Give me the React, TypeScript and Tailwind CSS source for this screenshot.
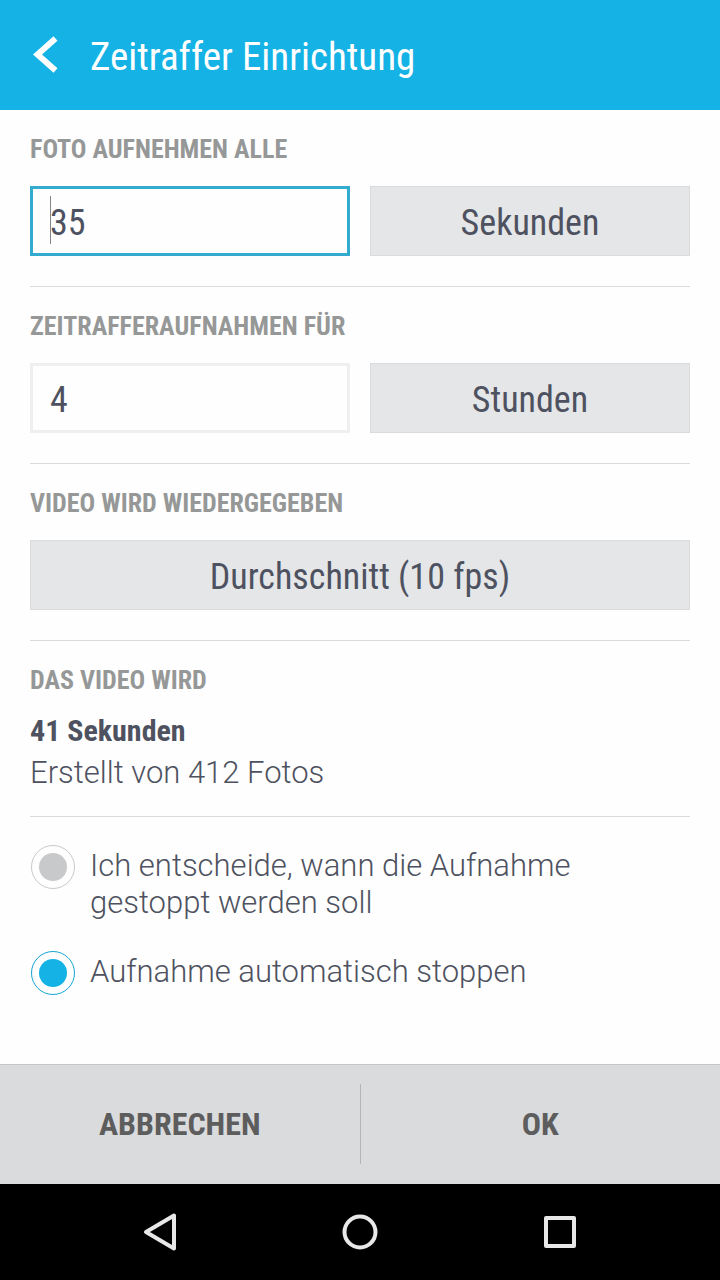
import { useState } from 'react'
import type { ReactNode } from 'react'

type StopMode = 'manual' | 'auto'

interface SectionProps {
  title: string
  htmlFor?: string
  children: ReactNode
}

function Section({ title, htmlFor, children }: SectionProps) {
  return (
    <section className="border-b border-[#dadbdc] pt-6 pb-[30px]">
      <label htmlFor={htmlFor} className="block mb-[22px] text-[26px] leading-[30px] font-bold text-[#969898]">
        {title}
      </label>
      {children}
    </section>
  )
}

interface NumberFieldProps {
  id: string
  value: string
  focused: boolean
  onChange: (value: string) => void
  onFocus: () => void
}

function NumberField({ id, value, focused, onChange, onFocus }: NumberFieldProps) {
  return (
    <div className="relative">
      <input
        id={id}
        type="text"
        inputMode="numeric"
        value={value}
        onChange={(e) => onChange(e.target.value)}
        onFocus={onFocus}
        className={`block w-full h-[70px] rounded-none border-[3px] pl-[17px] pt-1 text-4xl text-[#4e5260] caret-transparent outline-none ${
          focused ? 'border-[#33abce]' : 'border-[#efeff0]'
        }`}
      />
      {/* Cursor */}
      {focused && <span className="absolute left-5 top-2.5 h-12 w-px bg-[#85868b] pointer-events-none" />}
    </div>
  )
}

interface PickerProps {
  id?: string
  label: string
  value: string
  options: string[]
  onChange: (value: string) => void
}

function Picker({ id, label, value, options, onChange }: PickerProps) {
  return (
    <select
      id={id}
      aria-label={label}
      value={value}
      onChange={(e) => onChange(e.target.value)}
      className="block w-full h-[70px] appearance-none rounded-none border border-[#dadbdc] bg-[#e5e6e8] pt-1 text-center [text-align-last:center] text-4xl text-[#4e5260] outline-none"
    >
      {options.map((option) => (
        <option key={option} value={option}>{option}</option>
      ))}
    </select>
  )
}

const units = ['Sekunden', 'Minuten', 'Stunden']
const speeds = ['Langsam (5 fps)', 'Durchschnitt (10 fps)', 'Schnell (20 fps)']

const stopModes: { value: StopMode; label: string }[] = [
  { value: 'manual', label: 'Ich entscheide, wann die Aufnahme gestoppt werden soll' },
  { value: 'auto', label: 'Aufnahme automatisch stoppen' },
]

export default function App() {
  const [interval, setInterval] = useState('35')
  const [intervalUnit, setIntervalUnit] = useState('Sekunden')
  const [duration, setDuration] = useState('4')
  const [durationUnit, setDurationUnit] = useState('Stunden')
  const [speed, setSpeed] = useState('Durchschnitt (10 fps)')
  const [stopMode, setStopMode] = useState<StopMode>('auto')
  const [focused, setFocused] = useState('interval')

  return (
    <div className="flex min-h-screen flex-col bg-[#fefefe] font-['Roboto_Condensed','Roboto',sans-serif]">
      {/* Header */}
      <header className="flex h-[110px] items-center bg-[#15b2e5] pl-[30px] text-white">
        <button type="button" aria-label="Zurück" className="w-[60px]">
          <svg width="30" height="40" viewBox="0 0 30 40" fill="none" stroke="currentColor" strokeWidth="6">
            <path d="M25.5 3.5 7.5 19.5 25.5 35.5" />
          </svg>
        </button>
        <h1 className="pt-1 text-[39px] leading-[48px]">Zeitraffer Einrichtung</h1>
      </header>

      <main className="flex-1 px-[30px]">
        <Section title="FOTO AUFNEHMEN ALLE" htmlFor="interval">
          <div className="grid grid-cols-2 gap-5">
            <NumberField
              id="interval"
              value={interval}
              focused={focused === 'interval'}
              onChange={setInterval}
              onFocus={() => setFocused('interval')}
            />
            <Picker label="Einheit Intervall" value={intervalUnit} options={units} onChange={setIntervalUnit} />
          </div>
        </Section>

        <Section title="ZEITRAFFERAUFNAHMEN FÜR" htmlFor="duration">
          <div className="grid grid-cols-2 gap-5">
            <NumberField
              id="duration"
              value={duration}
              focused={focused === 'duration'}
              onChange={setDuration}
              onFocus={() => setFocused('duration')}
            />
            <Picker label="Einheit Dauer" value={durationUnit} options={units} onChange={setDurationUnit} />
          </div>
        </Section>

        <Section title="VIDEO WIRD WIEDERGEGEBEN" htmlFor="speed">
          <Picker id="speed" label="Video wird wiedergegeben" value={speed} options={speeds} onChange={setSpeed} />
        </Section>

        {/* Summary */}
        <section className="border-b border-[#dadbdc] pt-6 pb-[22px] text-[#4e5260]">
          <h2 className="mb-[15px] text-[26px] leading-[30px] font-bold text-[#969898]">DAS VIDEO WIRD</h2>
          <p className="text-[30px] leading-[42px] font-bold">41 Sekunden</p>
          <p className="font-['Roboto',sans-serif] text-[31px] leading-[42px] font-light">Erstellt von 412 Fotos</p>
        </section>

        {/* Stop mode */}
        <fieldset className="flex flex-col gap-8 pt-[30px] pb-[30px]">
          {stopModes.map((mode) => (
            <label
              key={mode.value}
              className="flex items-start gap-[15px] pl-px font-['Roboto',sans-serif] text-[31px] leading-[37px] font-light text-[#4e5260]"
            >
              <span className="relative -mt-0.5 flex size-11 shrink-0 items-center justify-center">
                <input
                  type="radio"
                  name="stopMode"
                  value={mode.value}
                  checked={stopMode === mode.value}
                  onChange={() => setStopMode(mode.value)}
                  className="peer size-11 appearance-none rounded-full border border-[#c8c9cb] checked:border-[#15a5d3]"
                />
                <span className="absolute size-7 rounded-full bg-[#c8c9cb] pointer-events-none peer-checked:bg-[#15b2e5]" />
              </span>
              <span className="max-w-[540px]">{mode.label}</span>
            </label>
          ))}
        </fieldset>
      </main>

      {/* Actions */}
      <footer className="flex h-[120px] items-center border-t border-[#c6c7c8] bg-[#dadbdd] pb-0.5 text-[32px] font-bold text-[#5d5d5e]">
        <button type="button" className="h-20 flex-1">ABBRECHEN</button>
        <div className="h-20 w-px bg-[#b4b5b6]" />
        <button type="button" className="h-20 flex-1">OK</button>
      </footer>

      {/* System navigation */}
      <nav className="flex h-24 items-center justify-center gap-[152px] bg-black text-[#e8e8e8]">
        <button type="button" aria-label="Zurück">
          <svg width="48" height="48" viewBox="0 0 48 48" fill="none" stroke="currentColor" strokeWidth="4" strokeLinejoin="round">
            <path d="M38 7.5v33L10 24Z" />
          </svg>
        </button>
        <button type="button" aria-label="Startbildschirm">
          <svg width="48" height="48" viewBox="0 0 48 48" fill="none" stroke="currentColor" strokeWidth="4">
            <circle cx="24" cy="24" r="15.5" />
          </svg>
        </button>
        <button type="button" aria-label="Übersicht">
          <svg width="48" height="48" viewBox="0 0 48 48" fill="none" stroke="currentColor" strokeWidth="4" strokeLinejoin="round">
            <path d="M10 10h28v28H10Z" />
          </svg>
        </button>
      </nav>
    </div>
  )
}
